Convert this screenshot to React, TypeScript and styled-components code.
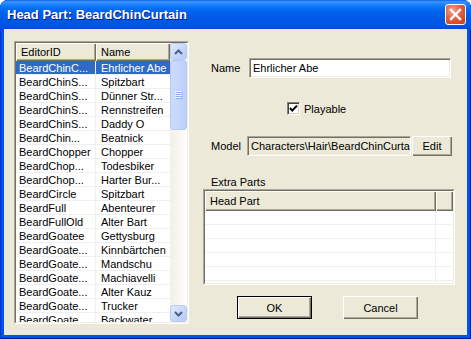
import React from 'react'
import styled, { createGlobalStyle, css } from 'styled-components'

//----- data
const parts: [string, string][] = [
	['BeardChinC...', 'Ehrlicher Abe'],
	['BeardChinS...', 'Spitzbart'],
	['BeardChinS...', 'Dünner Str...'],
	['BeardChinS...', 'Rennstreifen'],
	['BeardChinS...', 'Daddy O'],
	['BeardChin...', 'Beatnick'],
	['BeardChopper', 'Chopper'],
	['BeardChop...', 'Todesbiker'],
	['BeardChop...', 'Harter Bur...'],
	['BeardCircle', 'Spitzbart'],
	['BeardFull', 'Abenteurer'],
	['BeardFullOld', 'Alter Bart'],
	['BeardGoatee', 'Gettysburg'],
	['BeardGoate...', 'Kinnbärtchen'],
	['BeardGoate...', 'Mandschu'],
	['BeardGoate...', 'Machiavelli'],
	['BeardGoate...', 'Alter Kauz'],
	['BeardGoate...', 'Trucker'],
	['BeardGoate...', 'Backwater'],
]

const Chevron = ({ up }: { up?: boolean }) => (
	<svg width="9" height="6" viewBox="0 0 9 6">
		<polyline
			points={up ? '1,5 4.5,1.5 8,5' : '1,1 4.5,4.5 8,1'}
			fill="none"
			stroke="#4d6185"
			strokeWidth="2"
		/>
	</svg>
)

const App = () => {
	return (
		<>
			<GlobalStyle />
			<Window>
				<TitleBar>
					<TitleText>Head Part: BeardChinCurtain</TitleText>
					<CloseButton>
						<svg width="19" height="19" viewBox="0 0 19 19">
							<path d="M5 5 L14 14 M14 5 L5 14" stroke="#fff" strokeWidth="2.4" strokeLinecap="square" />
						</svg>
					</CloseButton>
				</TitleBar>

				<Client>
					<ListOuter $w={175} $h={283}>
						<ListInner>
							<Table>
								<HeaderRow>
									<HeaderCell $w={80} $pad={5}>EditorID</HeaderCell>
									<HeaderCell $pad={5}>Name</HeaderCell>
								</HeaderRow>
								{parts.map(([id, name], idx) => (
									<Row key={idx}>
										<Cell $w={80} $pad={3} $selected={idx === 0}>{id}</Cell>
										<Cell $pad={5} $selected={idx === 0}>{name}</Cell>
									</Row>
								))}
							</Table>
							<ScrollBar>
								<ScrollButton><Chevron up /></ScrollButton>
								<Thumb>
									<svg width="8" height="8" viewBox="0 0 8 8">
										{[0, 2, 4, 6].map(y => (
											<g key={y}>
												<line x1="0" y1={y + 0.5} x2="7" y2={y + 0.5} stroke="#eef4fe" />
												<line x1="1" y1={y + 1.5} x2="8" y2={y + 1.5} stroke="#8cb0f8" />
											</g>
										))}
									</svg>
								</Thumb>
								<Track />
								<ScrollButton><Chevron /></ScrollButton>
							</ScrollBar>
						</ListInner>
					</ListOuter>

					<Panel>
						<FieldRow $top={17}>
							<Label $w={38}>Name</Label>
							<TextBox $w={202} defaultValue="Ehrlicher Abe" readOnly />
						</FieldRow>

						<CheckRow>
							<CheckBox>
								<svg width="11" height="11" viewBox="0 0 11 11">
									<polyline points="2,5 4.3,7.6 9,2.6" fill="none" stroke="#000" strokeWidth="2" />
								</svg>
							</CheckBox>
							<span>Playable</span>
						</CheckRow>

						<FieldRow $top={21}>
							<Label $w={36}>Model</Label>
							<TextBox $w={164} $disabled defaultValue={'Characters\\Hair\\BeardChinCurtain.nif'} readOnly />
							<Button $w={40} $h={20}>Edit</Button>
						</FieldRow>

						<SectionLabel>Extra Parts</SectionLabel>

						<ListOuter $w={252} $h={96}>
							<ListInner>
								<Table>
									<HeaderRow $h={20}>
										<HeaderCell $w={231} $pad={5}>Head Part</HeaderCell>
										<HeaderCell />
									</HeaderRow>
									{[0, 1, 2, 3, 4, 5].map(i => (
										<Row key={i}>
											<Cell $w={231} />
											<Cell />
										</Row>
									))}
								</Table>
							</ListInner>
						</ListOuter>

						<ButtonRow>
							<Button $w={75} $h={23} $default>OK</Button>
							<Button $w={75} $h={23}>Cancel</Button>
						</ButtonRow>
					</Panel>
				</Client>
			</Window>
		</>
	)
}

export default App

const GlobalStyle = createGlobalStyle`
  html, body {
    margin: 0;
    padding: 0;
    background: #ffffff;
  }
  body {
    font-family: "Liberation Sans", Arial, sans-serif;
    font-size: 11px;
    color: #000;
  }
`

const raised = css`
  background: #ece9d8;
  box-shadow: inset 1px 1px #fff, inset -1px -1px #716f64, inset -2px -2px #aca899;
`

const Window = styled.div`
  width: 471px;
  height: 339px;
  display: flex;
  flex-direction: column;
  background: #0054e3;
  border-radius: 8px 8px 0 0;
  box-shadow: inset 1px 0 #0831d9, inset -1px 0 #001ea0, inset 0 -1px #00138c;
  overflow: hidden;
`

const TitleBar = styled.div`
  height: 29px;
  flex-shrink: 0;
  display: flex;
  align-items: center;
  justify-content: space-between;
  padding: 0 5px 0 7px;
  box-sizing: border-box;
  border-radius: 7px 7px 0 0;
  background: linear-gradient(to bottom,
    #0a5fe6 0%, #3d95ff 6%, #2b8bff 11%, #137dfe 18%, #0470f5 28%,
    #0062ec 42%, #005be6 58%, #0057e4 74%, #0055e3 88%, #0048d6 100%);
`

const TitleText = styled.div`
  color: #fff;
  font-weight: bold;
  font-size: 13px;
  text-shadow: 1px 1px #0a1e7a;
  padding-bottom: 1px;
`

const CloseButton = styled.div`
  width: 21px;
  height: 21px;
  box-sizing: border-box;
  border: 1px solid #fff;
  border-radius: 3px;
  display: flex;
  align-items: center;
  justify-content: center;
  background: radial-gradient(circle at 35% 30%, #f2a58f 0%, #e2603f 45%, #c63a1b 100%);
`

const Client = styled.div`
  flex: 1;
  margin: 0 4px 4px;
  background: #ece9d8;
  display: flex;
  align-items: flex-start;
  gap: 14px;
  padding: 12px 0 0 10px;
  box-sizing: border-box;
`

const ListOuter = styled.div<{ $w: number; $h: number }>`
  width: ${p => p.$w}px;
  height: ${p => p.$h}px;
  box-sizing: border-box;
  border: 1px solid;
  border-color: #aca899 #fff #fff #aca899;
  display: flex;
`

const ListInner = styled.div`
  flex: 1;
  display: flex;
  border: 1px solid;
  border-color: #716f64 #f1efe2 #f1efe2 #716f64;
  background: #fff;
  overflow: hidden;
`

const Table = styled.div`
  flex: 1;
  display: flex;
  flex-direction: column;
  overflow: hidden;
`

const HeaderRow = styled.div<{ $h?: number }>`
  display: flex;
  height: ${p => p.$h ?? 18}px;
  flex-shrink: 0;
`

const HeaderCell = styled.div<{ $w?: number; $pad?: number }>`
  ${raised};
  ${p => (p.$w ? `width: ${p.$w}px;` : 'flex: 1;')}
  flex-shrink: 0;
  box-sizing: border-box;
  padding-left: ${p => p.$pad ?? 0}px;
  display: flex;
  align-items: center;
  white-space: nowrap;
  overflow: hidden;
`

const Row = styled.div`
  display: flex;
  height: 14px;
  box-sizing: border-box;
  flex-shrink: 0;
  border-bottom: 1px solid #efefef;
`

const Cell = styled.div<{ $w?: number; $pad?: number; $selected?: boolean }>`
  ${p => (p.$w ? `width: ${p.$w}px; border-right: 1px solid #efefef;` : 'flex: 1;')}
  box-sizing: border-box;
  flex-shrink: 0;
  padding-left: ${p => p.$pad ?? 0}px;
  display: flex;
  align-items: center;
  white-space: nowrap;
  overflow: hidden;
  background: ${p => (p.$selected ? '#316ac5' : 'transparent')};
  color: ${p => (p.$selected ? '#fff' : '#000')};
`

const ScrollBar = styled.div`
  width: 17px;
  flex-shrink: 0;
  display: flex;
  flex-direction: column;
  background: linear-gradient(to right, #f0efe9, #fefefb);
`

const ScrollButton = styled.div`
  width: 17px;
  height: 17px;
  flex-shrink: 0;
  box-sizing: border-box;
  border: 1px solid #b9ccf6;
  border-radius: 3px;
  display: flex;
  align-items: center;
  justify-content: center;
  background: linear-gradient(135deg, #e3ebfe 0%, #c6d6fb 55%, #b6cafa 100%);
`

const Thumb = styled.div`
  height: 70px;
  flex-shrink: 0;
  box-sizing: border-box;
  border: 1px solid #b4c8f6;
  border-radius: 3px;
  display: flex;
  align-items: center;
  justify-content: center;
  background: linear-gradient(to right, #cddbfc, #bcd0fb);
`

const Track = styled.div`
  flex: 1;
`

const Panel = styled.div`
  width: 252px;
  display: flex;
  flex-direction: column;
`

const FieldRow = styled.div<{ $top: number }>`
  display: flex;
  align-items: center;
  height: 20px;
  margin-top: ${p => p.$top}px;
  padding-left: 8px;
`

const Label = styled.span<{ $w: number }>`
  width: ${p => p.$w}px;
  flex-shrink: 0;
`

const TextBox = styled.input<{ $w: number; $disabled?: boolean }>`
  width: ${p => p.$w}px;
  height: 20px;
  box-sizing: border-box;
  margin: 0;
  padding: 0 0 0 3px;
  font: inherit;
  color: #000;
  outline: none;
  border: 1px solid;
  border-color: #aca899 #fff #fff #aca899;
  box-shadow: inset 1px 1px #716f64, inset -1px -1px #f1efe2;
  background: ${p => (p.$disabled ? '#ece9d8' : '#fff')};
`

const CheckRow = styled.label`
  display: flex;
  align-items: center;
  gap: 4px;
  height: 13px;
  margin-top: 24px;
  padding-left: 84px;
`

const CheckBox = styled.span`
  width: 13px;
  height: 13px;
  box-sizing: border-box;
  background: #fff;
  border: 1px solid;
  border-color: #808080 #fff #fff #808080;
  box-shadow: inset 1px 1px #404040, inset -1px -1px #d4d0c8;
  display: flex;
  align-items: center;
  justify-content: center;
`

const SectionLabel = styled.div`
  margin-top: 20px;
  height: 13px;
  line-height: 13px;
  padding-left: 8px;
`

const Button = styled.button<{ $w: number; $h: number; $default?: boolean }>`
  ${raised};
  width: ${p => p.$w}px;
  height: ${p => p.$h}px;
  margin: 0 0 0 ${p => (p.$default ? 0 : 1)}px;
  padding: 0;
  font: inherit;
  color: #000;
  border: ${p => (p.$default ? '1px solid #000' : 'none')};
  box-sizing: border-box;
  cursor: default;
`

const ButtonRow = styled.div`
  display: flex;
  gap: 30px;
  margin-top: 11px;
  padding-left: 34px;
`
